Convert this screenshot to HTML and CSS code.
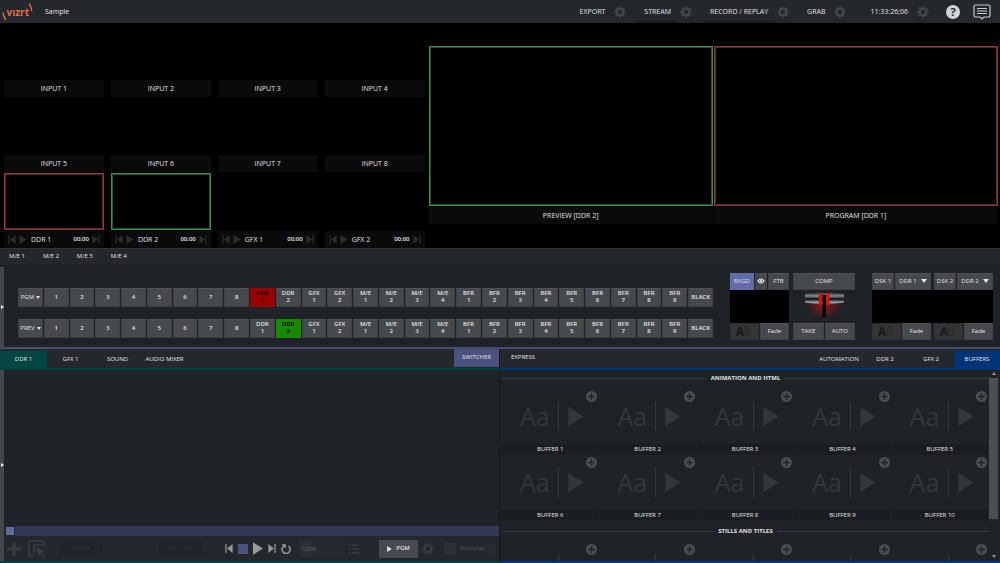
FILE: index.html
```html
<!DOCTYPE html>
<html lang="en">
<head>
<meta charset="utf-8">
<meta name="viewport" content="width=device-width, initial-scale=1">
<title>Vizrt - Sample</title>
<link rel="stylesheet" href="styles.css">
</head>
<body>
<svg class="defs" aria-hidden="true">
  <symbol id="gear" viewBox="0 0 12 12"><circle cx="6" cy="6" r="3.3" fill="none" stroke="currentColor" stroke-width="2"/><circle cx="6" cy="6" r="4.9" fill="none" stroke="currentColor" stroke-width="1.8" stroke-dasharray="2 1.848" stroke-dashoffset="1"/></symbol>
  <symbol id="prev" viewBox="0 0 8 10"><path d="M0 0h1.3v10H0zM8 0v10L2 5z" fill="currentColor"/></symbol>
  <symbol id="next" viewBox="0 0 8 10"><path d="M6.7 0H8v10H6.7zM0 0v10l6-5z" fill="currentColor"/></symbol>
  <symbol id="play" viewBox="0 0 8 10"><path d="M0 0l8 5-8 5z" fill="currentColor"/></symbol>
  <symbol id="plus" viewBox="0 0 10 10"><circle cx="5" cy="5" r="5" fill="#4a4e51"/><path d="M5 2v6M2 5h6" stroke="#1f2327" stroke-width="1.3"/></symbol>
</svg>

<header class="topbar">
  <svg class="logo" viewBox="0 0 32 18" role="img" aria-label="vizrt">
    <path d="M1 9.500q.300 4 2.800 7.500M27.200 .700q2.300 3.500 2.600 7.500" stroke="#e07040" stroke-width="1.300" fill="none"/>
    <text x="4.500" y="12.500" class="logo-text">vızrt</text>
  </svg>
  <span class="session">Sample</span>
  <nav class="outputs">
    <div class="output"><button>EXPORT</button><button class="gear" aria-label="Export settings"><svg><use href="#gear"/></svg></button></div>
    <div class="output"><button class="under">STREAM</button><button class="gear" aria-label="Stream settings"><svg><use href="#gear"/></svg></button></div>
    <div class="output"><button class="under">RECORD / REPLAY</button><button class="gear" aria-label="Record settings"><svg><use href="#gear"/></svg></button></div>
    <div class="output"><button>GRAB</button><button class="gear" aria-label="Grab settings"><svg><use href="#gear"/></svg></button></div>
    <div class="output timing"><span class="clock">11:33:26;06</span><button class="gear" aria-label="Clock settings"><svg><use href="#gear"/></svg></button></div>
  </nav>
  <button class="help" aria-label="Help">?</button>
  <button class="notes" aria-label="Notifications"><svg viewBox="0 0 18 16"><path d="M2.500 1h13a1.500 1.500 0 0 1 1.500 1.500v9a1.500 1.500 0 0 1-1.500 1.500h-4.500L9 15l-2-2H2.500A1.500 1.500 0 0 1 1 11.500v-9A1.500 1.500 0 0 1 2.500 1z" fill="none" stroke="#c8c9ca" stroke-width="1.200"/><path d="M4 4.500h10M4 7h10M4 9.500h10" stroke="#c8c9ca" stroke-width="1"/></svg></button>
</header>

<main class="workspace">
<section class="monitors">
  <div class="sources">
    <div class="source"><div class="screen"></div><div class="label">INPUT 1</div></div>
    <div class="source"><div class="screen"></div><div class="label">INPUT 2</div></div>
    <div class="source"><div class="screen"></div><div class="label">INPUT 3</div></div>
    <div class="source"><div class="screen"></div><div class="label">INPUT 4</div></div>
    <div class="source"><div class="screen"></div><div class="label">INPUT 5</div></div>
    <div class="source"><div class="screen"></div><div class="label">INPUT 6</div></div>
    <div class="source"><div class="screen"></div><div class="label">INPUT 7</div></div>
    <div class="source"><div class="screen"></div><div class="label">INPUT 8</div></div>
    <div class="source"><div class="screen on-program"></div><div class="label deck"><svg><use href="#prev"/></svg><svg><use href="#play"/></svg><span class="deck-name">DDR 1</span><span class="time">00;00</span><svg><use href="#next"/></svg></div></div>
    <div class="source"><div class="screen on-preview"></div><div class="label deck"><svg><use href="#prev"/></svg><svg><use href="#play"/></svg><span class="deck-name">DDR 2</span><span class="time">00;00</span><svg><use href="#next"/></svg></div></div>
    <div class="source"><div class="screen"></div><div class="label deck"><svg><use href="#prev"/></svg><svg><use href="#play"/></svg><span class="deck-name">GFX 1</span><span class="time">00;00</span><svg><use href="#next"/></svg></div></div>
    <div class="source"><div class="screen"></div><div class="label deck"><svg><use href="#prev"/></svg><svg><use href="#play"/></svg><span class="deck-name">GFX 2</span><span class="time">00;00</span><svg><use href="#next"/></svg></div></div>
  </div>
  <div class="mains">
    <div class="main-view"><div class="screen on-preview"></div><div class="label">PREVIEW [DDR 2]</div></div>
    <div class="main-view"><div class="screen on-program"></div><div class="label">PROGRAM [DDR 1]</div></div>
  </div>
</section>

<nav class="me-tabs"><button>M/E 1</button><button>M/E 2</button><button>M/E 3</button><button>M/E 4</button></nav>

<section class="switcher">
  <button class="rail" aria-label="Expand switcher"></button>
  <div class="buses">
    <div class="bus">
      <button class="bus-name">PGM <i class="caret"></i></button>
      <button>1</button><button>2</button><button>3</button><button>4</button><button>5</button><button>6</button><button>7</button><button>8</button>
      <button class="live">DDR<br>1</button><button>DDR<br>2</button><button>GFX<br>1</button><button>GFX<br>2</button>
      <button>M/E<br>1</button><button>M/E<br>2</button><button>M/E<br>3</button><button>M/E<br>4</button>
      <button>BFR<br>1</button><button>BFR<br>2</button><button>BFR<br>3</button><button>BFR<br>4</button><button>BFR<br>5</button><button>BFR<br>6</button><button>BFR<br>7</button><button>BFR<br>8</button><button>BFR<br>9</button>
      <button>BLACK</button>
    </div>
    <div class="bus">
      <button class="bus-name">PREV <i class="caret"></i></button>
      <button>1</button><button>2</button><button>3</button><button>4</button><button>5</button><button>6</button><button>7</button><button>8</button>
      <button>DDR<br>1</button><button class="ready">DDR<br>2</button><button>GFX<br>1</button><button>GFX<br>2</button>
      <button>M/E<br>1</button><button>M/E<br>2</button><button>M/E<br>3</button><button>M/E<br>4</button>
      <button>BFR<br>1</button><button>BFR<br>2</button><button>BFR<br>3</button><button>BFR<br>4</button><button>BFR<br>5</button><button>BFR<br>6</button><button>BFR<br>7</button><button>BFR<br>8</button><button>BFR<br>9</button>
      <button>BLACK</button>
    </div>
  </div>
  <div class="transition">
    <div class="keyer">
      <div class="pair three"><button class="selected">BKGD</button><button aria-label="Show"><svg class="eye" viewBox="0 0 8 6"><path d="M1 3q3-4 6 0q-3 4-6 0z" fill="none" stroke="#eee" stroke-width="1.200"/><circle cx="4" cy="3" r="1" fill="#eee"/></svg></button><button>FTB</button></div>
      <div class="pane"></div>
      <div class="pair even"><button class="ab" aria-label="Transition"><b>A</b><b class="second">B</b></button><button>Fade</button></div>
    </div>
    <div class="tbar">
      <button>COMP</button>
      <svg class="lever" viewBox="0 0 62 33" role="img" aria-label="T-bar">
        <defs>
          <radialGradient id="glow"><stop offset="0" stop-color="#c01010" stop-opacity=".75"/><stop offset="1" stop-color="#c01010" stop-opacity="0"/></radialGradient>
          <linearGradient id="steel" x1="0" y1="0" x2="0" y2="1"><stop offset="0" stop-color="#3a3c3e"/><stop offset=".25" stop-color="#85888a"/><stop offset=".4" stop-color="#4a4c4e"/><stop offset=".5" stop-color="#0c0c0c"/><stop offset=".65" stop-color="#444"/><stop offset=".8" stop-color="#a5a7a9"/><stop offset="1" stop-color="#333"/></linearGradient>
        </defs>
        <ellipse cx="31" cy="15" rx="18" ry="13" fill="url(#glow)"/>
        <path d="M12 4q19-2 39 0v8.500q-19 4-39 0z" fill="url(#steel)"/>
        <path d="M26 3h3.500v12H26zM33 3h3.500v12H33z" fill="#d31212"/>
        <path d="M29.500 5H33v22h-3.500z" fill="#050505"/>
      </svg>
      <div class="pair even"><button>TAKE</button><button>AUTO</button></div>
    </div>
    <div class="dsk-group">
      <div class="keyer"><div class="pair dsk"><button>DSK 1</button><button>DDR 1 <i class="caret"></i></button></div><div class="pane"></div><div class="pair even"><button class="ab" aria-label="DSK 1 transition"><b>A</b><b class="second">B</b></button><button>Fade</button></div></div>
      <div class="keyer"><div class="pair dsk"><button>DSK 2</button><button>DDR 2 <i class="caret"></i></button></div><div class="pane"></div><div class="pair even"><button class="ab" aria-label="DSK 2 transition"><b>A</b><b class="second">B</b></button><button>Fade</button></div></div>
    </div>
  </div>
</section>

<section class="lower">
  <div class="side media">
    <nav class="tabs"><button class="active">DDR 1</button><button>GFX 1</button><button>SOUND</button><button>AUDIO MIXER</button><button class="mode chosen">SWITCHER</button></nav>
    <div class="media-body">
      <button class="rail" aria-label="Expand media bin"></button>
      <div class="player">
        <div class="bin"></div>
        <input class="scrub" type="range" min="0" max="100" value="0" aria-label="Position">
        <div class="controls">
          <button class="dim" aria-label="Add"><svg class="i14" viewBox="0 0 14 14"><path d="M7 0v14M0 7h14" stroke="currentColor" stroke-width="3"/></svg></button>
          <button class="dim pick" aria-label="Select"><svg class="i18" viewBox="0 0 18 18"><path d="M5 16H3a2 2 0 0 1-2-2V3a2 2 0 0 1 2-2h11a2 2 0 0 1 2 2v3M6 13V5h8" fill="none" stroke="currentColor" stroke-width="1.600"/><path d="M8 7l9 4-3.500 1.200 3.500 4-1.500 1.300-3.400-4L10.500 17z" fill="currentColor"/></svg></button>
          <button class="ghost">SET IN</button>
          <button class="ghost out">SET OUT</button>
          <div class="transport">
            <button aria-label="Previous"><svg class="i8"><use href="#prev"/></svg></button>
            <button class="stop" aria-label="Stop"></button>
            <button aria-label="Play"><svg class="i-play"><use href="#play"/></svg></button>
            <button aria-label="Next"><svg class="i8"><use href="#next"/></svg></button>
            <button aria-label="Loop"><svg class="i10" viewBox="0 0 10 10"><path d="M7.500 2.200a4 4 0 1 1-4.500-.200" fill="none" stroke="currentColor" stroke-width="1.500"/><path d="M.500 .300h4.300v4.200z" fill="currentColor"/></svg></button>
          </div>
          <input class="speed" type="text" value="100%" aria-label="Speed">
          <button class="dim" aria-label="List"><svg class="i10" viewBox="0 0 10 10"><path d="M0 1h2M3 1h7M0 5h2M3 5h7M0 9h2M3 9h7" stroke="currentColor" stroke-width="1.300"/></svg></button>
          <button class="send"><svg class="i5"><use href="#play"/></svg>PGM</button>
          <button class="dim" aria-label="Player settings"><svg class="i12"><use href="#gear"/></svg></button>
          <label class="auto"><input type="checkbox">Autoplay</label>
          <svg class="info" viewBox="0 0 8 8"><circle cx="4" cy="4" r="3.500" fill="none" stroke="currentColor" stroke-width=".800"/><path d="M4 1.500v1M4 3.300v3" stroke="currentColor"/></svg>
        </div>
      </div>
    </div>
  </div>
  <div class="side buffers">
    <nav class="tabs"><button class="mode">EXPRESS</button><button class="push">AUTOMATION</button><button>DDR 2</button><button>GFX 2</button><button class="active">BUFFERS</button></nav>
    <div class="buffer-body">
      <div class="buffer-list">
        <h2>ANIMATION AND HTML</h2>
        <div class="grid">
          <div class="buffer"><div class="art"><span>Aa</span><i></i><svg><use href="#play"/></svg></div><button class="add" aria-label="Add to buffer 1"><svg><use href="#plus"/></svg></button><div class="name">BUFFER 1</div></div>
          <div class="buffer"><div class="art"><span>Aa</span><i></i><svg><use href="#play"/></svg></div><button class="add" aria-label="Add to buffer 2"><svg><use href="#plus"/></svg></button><div class="name">BUFFER 2</div></div>
          <div class="buffer"><div class="art"><span>Aa</span><i></i><svg><use href="#play"/></svg></div><button class="add" aria-label="Add to buffer 3"><svg><use href="#plus"/></svg></button><div class="name">BUFFER 3</div></div>
          <div class="buffer"><div class="art"><span>Aa</span><i></i><svg><use href="#play"/></svg></div><button class="add" aria-label="Add to buffer 4"><svg><use href="#plus"/></svg></button><div class="name">BUFFER 4</div></div>
          <div class="buffer"><div class="art"><span>Aa</span><i></i><svg><use href="#play"/></svg></div><button class="add" aria-label="Add to buffer 5"><svg><use href="#plus"/></svg></button><div class="name">BUFFER 5</div></div>
          <div class="buffer"><div class="art"><span>Aa</span><i></i><svg><use href="#play"/></svg></div><button class="add" aria-label="Add to buffer 6"><svg><use href="#plus"/></svg></button><div class="name">BUFFER 6</div></div>
          <div class="buffer"><div class="art"><span>Aa</span><i></i><svg><use href="#play"/></svg></div><button class="add" aria-label="Add to buffer 7"><svg><use href="#plus"/></svg></button><div class="name">BUFFER 7</div></div>
          <div class="buffer"><div class="art"><span>Aa</span><i></i><svg><use href="#play"/></svg></div><button class="add" aria-label="Add to buffer 8"><svg><use href="#plus"/></svg></button><div class="name">BUFFER 8</div></div>
          <div class="buffer"><div class="art"><span>Aa</span><i></i><svg><use href="#play"/></svg></div><button class="add" aria-label="Add to buffer 9"><svg><use href="#plus"/></svg></button><div class="name">BUFFER 9</div></div>
          <div class="buffer"><div class="art"><span>Aa</span><i></i><svg><use href="#play"/></svg></div><button class="add" aria-label="Add to buffer 10"><svg><use href="#plus"/></svg></button><div class="name">BUFFER 10</div></div>
        </div>
        <h2>STILLS AND TITLES</h2>
        <div class="grid">
          <div class="buffer"><div class="art"><span>Aa</span><i></i></div><button class="add" aria-label="Add to still 1"><svg><use href="#plus"/></svg></button></div>
          <div class="buffer"><div class="art"><span>Aa</span><i></i></div><button class="add" aria-label="Add to still 2"><svg><use href="#plus"/></svg></button></div>
          <div class="buffer"><div class="art"><span>Aa</span><i></i></div><button class="add" aria-label="Add to still 3"><svg><use href="#plus"/></svg></button></div>
          <div class="buffer"><div class="art"><span>Aa</span><i></i></div><button class="add" aria-label="Add to still 4"><svg><use href="#plus"/></svg></button></div>
          <div class="buffer"><div class="art"><span>Aa</span><i></i></div><button class="add" aria-label="Add to still 5"><svg><use href="#plus"/></svg></button></div>
        </div>
      </div>
      <div class="scroller"><i class="up"></i><div class="track"><div class="thumb"></div></div><i class="down"></i></div>
    </div>
  </div>
</section>
</main>
</body>
</html>
```
FILE: styles.css
```css
* { box-sizing: border-box; }
body {
  margin: 0;
  height: 100vh;
  display: flex;
  flex-direction: column;
  overflow: hidden;
  background: #1f2327;
  color: #e2e3e4;
  font: 7px/9px "Open Sans", "Noto Sans", sans-serif;
}
button, input { font: inherit; color: inherit; margin: 0; padding: 0; border: 0; background: none; }
button { display: flex; align-items: center; justify-content: center; white-space: nowrap; }
svg { display: block; flex: none; }
.defs { position: absolute; width: 0; height: 0; }

/* top bar */
.topbar { display: flex; align-items: center; height: 23px; flex: none; padding: 0 9px 0 2px; background: #24282c; }
.logo { width: 32px; height: 18px; margin-right: 11px; }
.logo-text { font: 700 10px "Open Sans", sans-serif; fill: #e07040; }
.session { flex: 1; }
.outputs { display: flex; gap: 11px; align-self: stretch; margin-right: 17px; }
.output { display: flex; align-items: center; gap: 2px; }
.timing { margin-left: 6px; }
.output > button:first-child, .clock { padding: 0 7px; }
.output > button { align-self: stretch; border-bottom: 2px solid transparent; border-top: 2px solid transparent; }
.output > .under { border-bottom-color: #191b1d; }
.gear { color: #45494c; }
.gear svg { width: 12px; height: 12px; }
.help { width: 14px; height: 14px; border-radius: 50%; background: #d2d3d4; color: #24282c; font-size: 11px; font-weight: 700; margin-right: 13px; }
.notes svg { width: 18px; height: 16px; }

/* monitors */
.workspace { flex: 1; min-height: 0; display: flex; flex-direction: column; }
.monitors { display: grid; grid-template-columns: 3fr 4fr; background: #000; flex: none; }
.sources { display: grid; grid-template-columns: repeat(4, 1fr); gap: 1px 7px; padding: 0 4px; }
.source, .main-view { display: grid; gap: 1px; }
.screen { aspect-ratio: 16 / 9; border: 1px solid transparent; }
.label { height: 17px; display: flex; align-items: center; justify-content: center; background: #0a0a0a; }
.on-program { border-color: #8c3d3d; box-shadow: inset 0 0 0 1px #5c2424; }
.on-preview { border-color: #3f8a4c; box-shadow: inset 0 0 0 1px #20542a; }
.deck { gap: 3px; padding: 0 4px; }
.deck svg { width: 8px; height: 9px; color: #2b2d2f; }
.deck-name { flex: 1; padding-left: 1px; }
.time { font-size: 6px; font-weight: 600; }
.mains { display: grid; grid-template-columns: 1fr 1fr; gap: 1px; padding: 0 2px 0 0; align-content: center; }

/* mix / effect tabs */
.me-tabs { display: flex; gap: 18px; height: 18px; flex: none; padding: 0 9px; font-size: 6px; background: #24282c; border-top: 1px solid #303438; border-bottom: 1px solid #1b1e21; }

/* switcher */
.switcher { display: flex; flex: none; padding: 1px 7px 0 0; border-bottom: 2px solid #464c70; font-size: 6px; line-height: 7px; }
.rail { position: relative; flex: none; width: 4px; background: #44484b; }
.rail::after { content: ""; border: 2px solid transparent; border-left: 3px solid #eee; border-right: 0; }
.buses { flex: 1; display: grid; gap: 12px; align-content: start; padding: 21px 17px 9px 14px; }
.bus { display: grid; grid-template-columns: repeat(27, minmax(0, 1fr)); gap: 1px; height: 19px; }
.bus button, .pair button, .tbar > button { background: #474a4d; border: 1px solid #3f4245; border-top-color: #505356; }
.bus button { font-weight: 600; text-align: center; }
.bus .bus-name { font-weight: 400; gap: 2px; }
.bus .live { background: #9a0000; border-color: #9a0000; color: #000; }
.bus .ready { background: #178a00; border-color: #178a00; color: #000; }
.caret { border: 3px solid transparent; border-top: 4px solid #e6e6e6; border-bottom: 0; }
.bus .caret { border-width: 3px 2px 0; }
.transition { display: flex; padding: 6px 0 7px; }
.keyer { width: 59px; display: grid; grid-template-rows: 17px 33px 17px; }
.pane { background: #000; }
.pair { display: grid; gap: 1px; }
.three { grid-template-columns: 24px 12px 1fr; }
.even { grid-template-columns: 1fr 1fr; }
.dsk { grid-template-columns: 22px 1fr; }
.dsk button { gap: 4px; }
.pair .selected { background: #626ca8; border-color: #626ca8; color: #d8dbf0; }
.eye { width: 8px; height: 6px; }
.pair .ab { background: #333435; border-color: #2e2f30; color: #18191a; font-size: 12px; padding-right: 2px; }
.ab .second { color: #2d2e2f; margin-left: -1px; }
.tbar { width: 62px; margin: 0 17px 0 4px; display: grid; grid-template-rows: 17px 33px 17px; }
.lever { width: 62px; height: 33px; }
.dsk-group { display: flex; gap: 3px; background: linear-gradient(#000, #000) center / 100% 33px no-repeat; }
.dsk-group .pair { background: #1f2327; }

/* lower panes */
.lower { flex: 1; min-height: 0; display: grid; grid-template-columns: 1fr 1fr; }
.side { display: flex; flex-direction: column; min-width: 0; min-height: 0; border-bottom: 2px solid; }
.media { border-color: #00403e; border-right: 1px solid #171a1d; }
.buffers { border-color: #003478; }
.tabs { display: flex; height: 21px; flex: none; padding-top: 2px; font-size: 6px; background: #24282c; border-bottom: 2px solid; border-color: inherit; }
.tabs button { min-width: 47px; }
.tabs .active { background: #004744; }
.buffers .tabs button { min-width: 46px; }
.buffers .tabs .active { background: #003478; }
.tabs .mode { height: 18px; margin-top: -2px; min-width: 45px; }
.tabs .chosen { margin-left: auto; background: #4b5280; }
.tabs .push { margin-left: auto; }
.media-body { flex: 1; display: flex; min-height: 0; }
.player { flex: 1; min-width: 0; display: flex; flex-direction: column; padding-left: 1px; }
.bin { flex: 1; }
.scrub { appearance: none; display: block; width: 100%; height: 10px; background: #343858; }
.scrub::-webkit-slider-thumb { appearance: none; width: 10px; height: 10px; background: #626a98; border: 1px solid #22263c; }
.controls { display: flex; align-items: center; height: 25px; padding: 0 3px 0 2px; background: #24282c; }
.dim { color: #383c40; }
.pick { margin: 0 13px 0 7px; }
.ghost { width: 44px; height: 16px; background: #212529; color: #2d3135; font-size: 6px; }
.out { margin-left: 56px; }
.transport { display: flex; align-items: center; gap: 5px; margin-left: 22px; color: #999b9d; }
.stop { width: 10px; height: 10px; background: #4a5280; }
.i5 { width: 5px; height: 6px; }
.i8 { width: 8px; height: 9px; }
.i10 { width: 10px; height: 10px; }
.i12 { width: 12px; height: 12px; }
.i14 { width: 14px; height: 14px; }
.i18 { width: 18px; height: 18px; }
.i-play { width: 10px; height: 13px; }
.speed { width: 45px; height: 17px; margin: 0 5px 0 8px; padding-left: 2px; font-size: 6px; color: #66696c; background: linear-gradient(90deg, #2b2f32 13px, #26292d 13px); }
.send { gap: 4px; width: 39px; height: 18px; margin: 0 4px 0 20px; background: #474a4d; font-size: 6px; font-weight: 600; }
.auto { display: flex; align-items: center; gap: 4px; margin: 0 auto 0 10px; font-size: 6px; color: #55595c; }
.auto input { appearance: none; width: 12px; height: 12px; background: #2c3033; }
.info { width: 8px; height: 8px; color: #35393c; }

/* buffers */
.buffer-body { flex: 1; min-height: 0; display: flex; padding: 0 2px; }
.buffer-list { flex: 1; min-width: 0; overflow: hidden; }
.buffer-list h2 { display: flex; align-items: center; gap: 4px; height: 18px; margin: 0; font-size: 6px; font-weight: 700; }
.buffer-list h2::before, .buffer-list h2::after { content: ""; flex: 1; height: 1px; background: #393d40; }
.grid { display: grid; grid-template-columns: repeat(5, 1fr); padding-top: 1px; margin-bottom: 2px; }
.buffer { position: relative; display: grid; grid-template-rows: 55px 11px; }
.art { display: flex; align-items: center; padding: 0 0 0 18px; color: #33373b; }
.art span { width: 38px; font-size: 25px; line-height: 30px; }
.art i { width: 1px; height: 30px; margin-right: 9px; background: #33373b; }
.art svg { width: 16px; height: 19px; }
.add { position: absolute; top: 2px; right: 2px; }
.add svg { width: 11px; height: 11px; }
.name { display: flex; align-items: center; justify-content: center; background: #1b1e21; border-right: 1px solid #1f2327; font-size: 6px; }
.scroller { width: 9px; display: flex; flex-direction: column; align-items: center; padding: 2px 0 3px; }
.track { flex: 1; width: 100%; padding: 3px 0; }
.thumb { height: 81%; background: #4b4f52; }
.up, .down { border: 2px solid transparent; }
.up { border-bottom: 3px solid #999; border-top: 0; }
.down { border-top: 3px solid #999; border-bottom: 0; }
```
